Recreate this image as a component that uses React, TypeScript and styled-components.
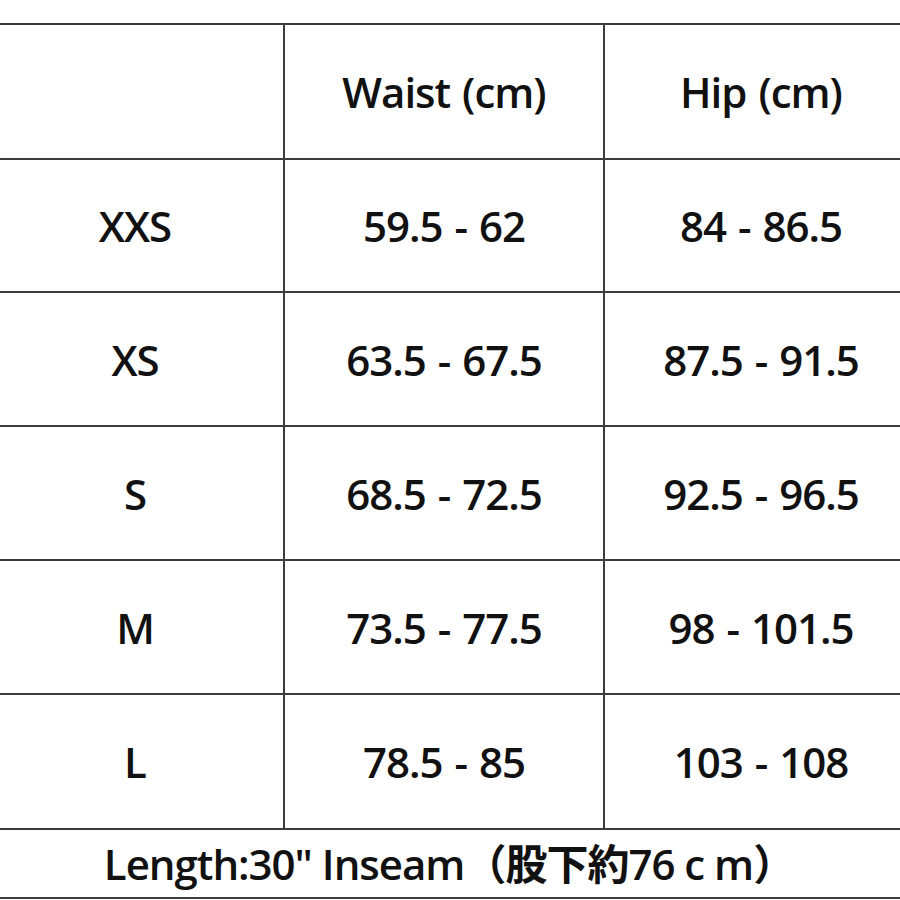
import React from 'react';
import styled, { createGlobalStyle } from 'styled-components';

const GlobalStyle = createGlobalStyle`
  html, body {
    margin: 0;
    padding: 0;
    background: #ffffff;
    overflow: hidden;
  }
  body {
    font-family: "Open Sans", "Noto Sans", "Noto Sans CJK JP", sans-serif;
    color: #111111;
  }
`;

const Page = styled.div`
  width: 900px;
  height: 900px;
  padding-top: 23px;
  box-sizing: border-box;
  overflow: hidden;
`;

const Sheet = styled.div`
  display: grid;
  grid-template-columns: 296px 320px 314px;
  grid-template-rows: 135px 133px 134px 134px 134px 135px 71px;
  width: 930px;
  margin-left: -13px;
`;

const Cell = styled.div<{ $divider?: boolean }>`
  display: flex;
  align-items: center;
  justify-content: center;
  box-sizing: border-box;
  border-top: 2px solid #3c3c3c;
  border-left: ${(p) => (p.$divider ? '2px solid #3c3c3c' : 'none')};
  font-size: 42px;
  font-weight: 600;
  letter-spacing: -1px;
  word-spacing: 2px;
  white-space: nowrap;
`;

const Footer = styled.div`
  grid-column: 1 / -1;
  display: flex;
  align-items: center;
  justify-content: center;
  box-sizing: border-box;
  border-top: 2px solid #3c3c3c;
  border-bottom: 2px solid #3c3c3c;
  padding-right: 6px;
  padding-bottom: 4px;
  font-family: "Open Sans", "Noto Sans CJK JP", sans-serif;
  font-size: 42px;
  font-weight: 600;
  letter-spacing: -1px;
  white-space: nowrap;
`;

const rows = [
  { size: 'XXS', waist: '59.5 - 62', hip: '84 - 86.5' },
  { size: 'XS', waist: '63.5 - 67.5', hip: '87.5 - 91.5' },
  { size: 'S', waist: '68.5 - 72.5', hip: '92.5 - 96.5' },
  { size: 'M', waist: '73.5 - 77.5', hip: '98 - 101.5' },
  { size: 'L', waist: '78.5 - 85', hip: '103 - 108' }
];

export default function App () {
  return (
    <Page>
      <GlobalStyle />
      <Sheet>
        <Cell />
        <Cell $divider>Waist (cm)</Cell>
        <Cell $divider>Hip (cm)</Cell>
        {rows.map((row) => (
          <React.Fragment key={row.size}>
            <Cell>{row.size}</Cell>
            <Cell $divider>{row.waist}</Cell>
            <Cell $divider>{row.hip}</Cell>
          </React.Fragment>
        ))}
        <Footer>Length:30" Inseam（股下約76 c m）</Footer>
      </Sheet>
    </Page>
  );
}
